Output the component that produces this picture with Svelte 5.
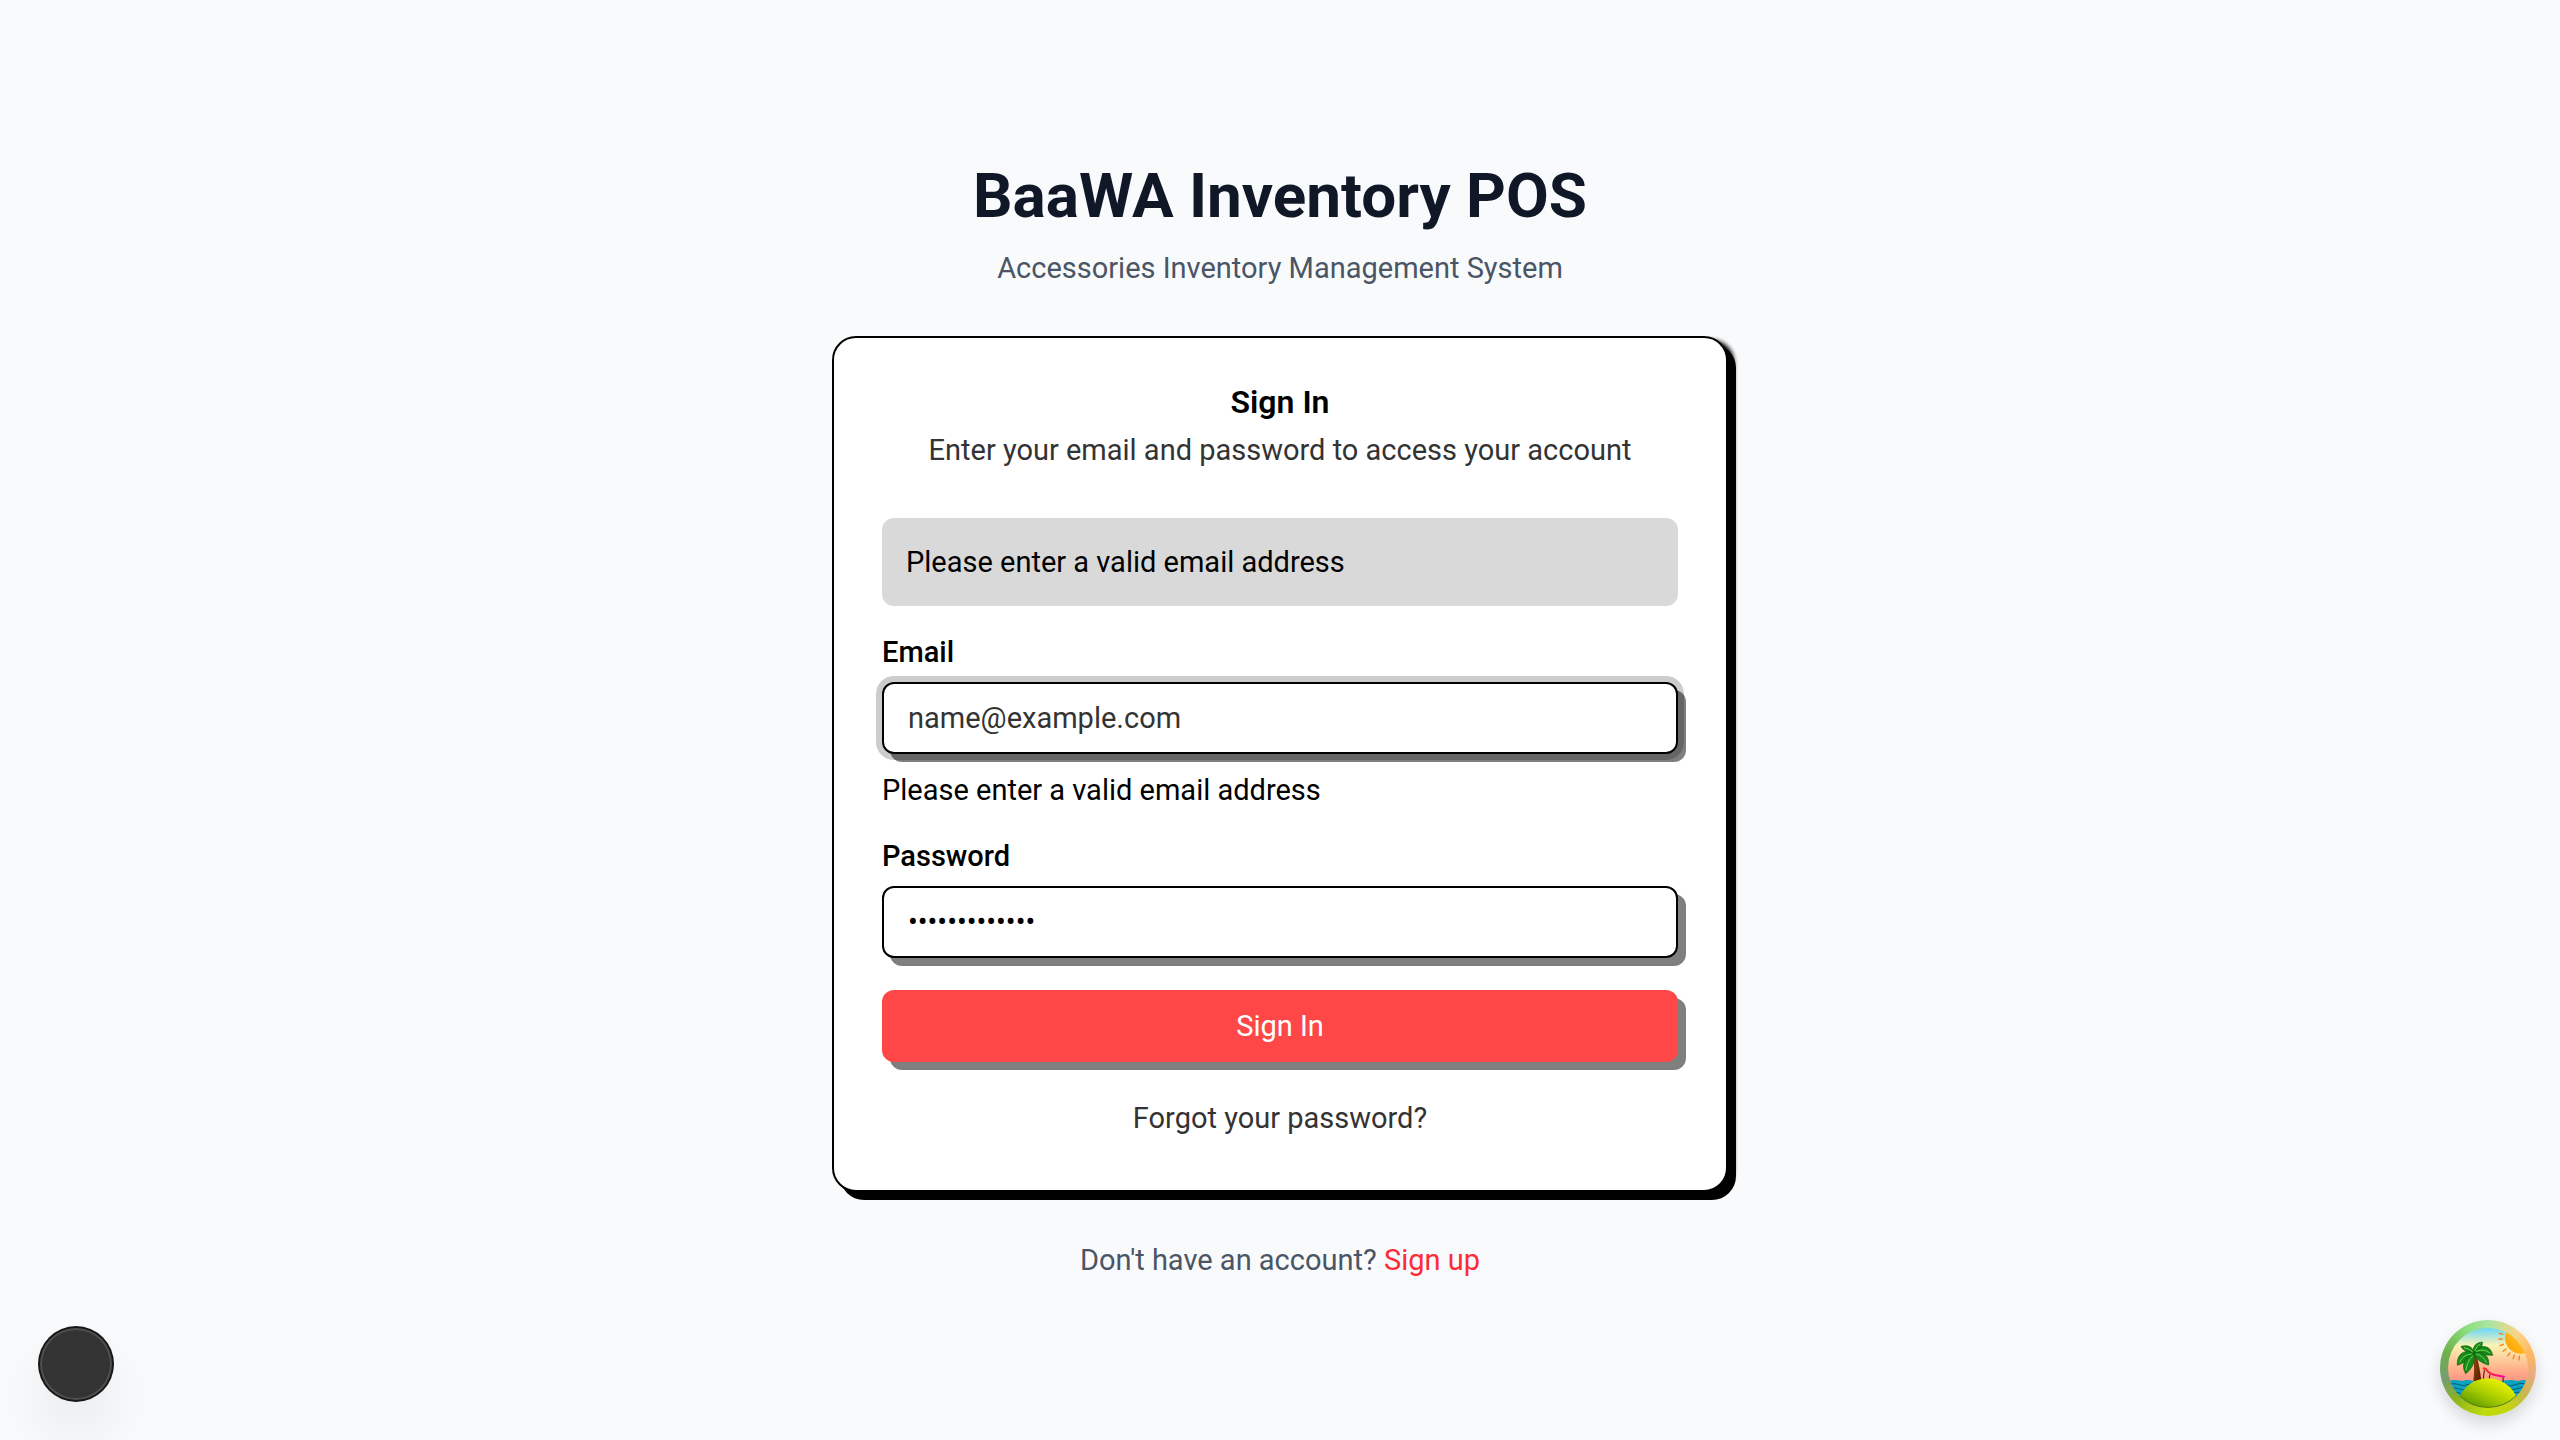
<script lang="ts">
  let email = $state('');
  let password = $state('password12345');
  const message = 'Please enter a valid email address';
  const rays = [4, 20, 36, 53, 70, 87, 102];
</script>

<main class="page">
  <div class="column">
    <header class="brand">
      <h1>BaaWA Inventory POS</h1>
      <p>Accessories Inventory Management System</p>
    </header>

    <section class="card">
      <div class="card-head">
        <h2>Sign In</h2>
        <p>Enter your email and password to access your account</p>
      </div>

      <form class="form" novalidate onsubmit={(e) => e.preventDefault()}>
        <div class="alert" role="alert">{message}</div>

        <div class="field">
          <label for="email">Email</label>
          <input
            id="email"
            class="invalid"
            type="email"
            placeholder="name@example.com"
            aria-invalid="true"
            aria-describedby="email-error"
            bind:value={email}
          />
          <p id="email-error" class="error">{message}</p>
        </div>

        <div class="field">
          <label for="password">Password</label>
          <input id="password" type="password" bind:value={password} />
        </div>

        <button class="submit" type="submit">Sign In</button>

        <div class="forgot"><a href="#forgot">Forgot your password?</a></div>
      </form>
    </section>

    <p class="signup">Don't have an account? <a href="#signup">Sign up</a></p>
  </div>
</main>

<button class="dev-badge" type="button" aria-label="Open dev tools"></button>

<button class="island" type="button" aria-label="Open query devtools">
  <svg viewBox="84 84 240 240" aria-hidden="true">
    <defs>
      <linearGradient id="sky" x1="0" y1="0" x2="0" y2="1">
        <stop offset="0" stop-color="#6bd8fa" />
        <stop offset="0.22" stop-color="#fbf3b4" />
        <stop offset="0.5" stop-color="#ffb48c" />
        <stop offset="0.72" stop-color="#fa8a80" />
      </linearGradient>
      <linearGradient id="sun" x1="0" y1="1" x2="1" y2="0">
        <stop offset="0" stop-color="#ff9a00" />
        <stop offset="0.7" stop-color="#ffd02e" />
      </linearGradient>
      <linearGradient id="sand" gradientUnits="userSpaceOnUse" x1="222" y1="236" x2="178" y2="330">
        <stop offset="0" stop-color="#e6f000" />
        <stop offset="0.5" stop-color="#a9cc00" />
        <stop offset="1" stop-color="#5c9c00" />
      </linearGradient>
      <linearGradient id="trunk" x1="0" y1="0" x2="1" y2="1">
        <stop offset="0" stop-color="#a34a08" />
        <stop offset="1" stop-color="#4d1c02" />
      </linearGradient>
      <linearGradient id="chair" x1="0" y1="0" x2="1" y2="0">
        <stop offset="0" stop-color="#ff2418" />
        <stop offset="1" stop-color="#ff00a2" />
      </linearGradient>
      <clipPath id="disc"><circle cx="204" cy="204" r="120" /></clipPath>
    </defs>
    <g clip-path="url(#disc)">
      <rect x="84" y="84" width="240" height="240" fill="url(#sky)" />
      <circle cx="302" cy="114" r="47" fill="url(#sun)" />
      <g stroke="#ff7a14" stroke-width="4" stroke-linecap="round">
        {#each rays as angle}
          <line x1="302" y1="169" x2="302" y2="180" transform="rotate({angle} 302 114)" />
        {/each}
      </g>
      <path d="M80 244q16-6 34-3 14 3 20 0 10-2 26 2v70H80z" fill="#0aa3c2" />
      <path d="M246 244q18-6 36-3 14 3 22 0 10-2 26 2v70h-84z" fill="#0aa3c2" />
      <g fill="none" stroke="#045b78" stroke-width="3">
        <path d="M84 255q18-8 32-1t34-2M88 268q16-8 30-1t28-2M98 280q12-6 24 0" />
        <path d="M256 254q14 8 30 0t36-1M258 266q16 8 30 1t30-2M276 279q14-4 32-1" />
      </g>
      <path d="M159 164q7-3 11 3 9 32 14 76h-24q5-36-1-79z" fill="url(#trunk)" />
      <g fill="#168a1b" stroke="#075c10" stroke-width="2" stroke-linejoin="round">
        <path d="M162 160C158 140 146 134 123 139C127 150 143 158 162 160Z" />
        <path d="M160 158C158 138 168 128 187 126C188 142 178 154 160 158Z" />
        <path d="M160 160C176 134 210 130 218 166C196 166 180 160 160 160Z" />
        <path d="M160 160C190 148 208 168 206 195C186 190 170 180 160 160Z" />
        <path d="M162 160C136 146 110 160 112 196C130 190 148 178 162 160Z" />
        <path d="M162 160C134 170 122 196 137 221C156 206 168 186 162 160Z" />
      </g>
      <g fill="none" stroke="#75d447" stroke-width="3" stroke-linecap="round">
        <path d="M133 143Q149 146 158 156M165 152Q169 138 180 132M170 154Q193 144 210 159M170 162Q190 168 199 187M154 162Q127 165 119 186M158 168Q141 184 138 210" />
      </g>
      <path d="M193 210l-3 27M210 223l-3 16M250 232l-2 18" stroke="#2c1030" stroke-width="3" />
      <path
        d="M191 205q8 1 12 9 8 8 18 10 14 3 31 6"
        fill="none"
        stroke="url(#chair)"
        stroke-width="6"
        stroke-linecap="round"
      />
      <ellipse cx="204" cy="320" rx="91" ry="85" fill="url(#sand)" />
      <path d="M121 289A120 120 0 0 0 288 288" fill="none" stroke="#557d08" stroke-width="3" />
    </g>
  </svg>
</button>

<style>
  :global(body) {
    margin: 0;
    background: #f9fafc;
    font-family: Roboto, 'Noto Sans', sans-serif;
    font-size: 29px;
    line-height: 40px;
    color: #000;
  }

  h1,
  h2,
  p {
    margin: 0;
  }

  a {
    color: inherit;
    text-decoration: none;
  }

  .page {
    box-sizing: border-box;
    min-height: 100vh;
    display: flex;
    align-items: center;
    justify-content: center;
    padding: 48px 32px;
    background: #f9fafc;
  }

  .column {
    width: 100%;
    max-width: 896px;
    display: flex;
    flex-direction: column;
    gap: 48px;
    text-align: center;
  }

  .brand {
    display: flex;
    flex-direction: column;
    gap: 16px;
    color: #4a5565;
  }

  h1 {
    font-size: 62px;
    line-height: 72px;
    font-weight: 700;
    color: #101828;
  }

  .card {
    display: flex;
    flex-direction: column;
    gap: 48px;
    padding: 48px;
    border: 2px solid #000;
    border-radius: 24px;
    background: #fff;
    box-shadow:
      8px 8px 0 0 #000,
      8px 2px 4px -2px #000;
  }

  .card-head {
    display: flex;
    flex-direction: column;
    gap: 12px;
    color: #333;
  }

  h2 {
    font-size: 32px;
    line-height: 32px;
    font-weight: 600;
    color: #000;
  }

  .form {
    display: flex;
    flex-direction: column;
    gap: 32px;
  }

  .alert {
    padding: 24px;
    border-radius: 12px;
    background: #d9d9d9;
    text-align: left;
  }

  .field {
    display: flex;
    flex-direction: column;
    gap: 16px;
    text-align: left;
  }

  label {
    line-height: 28px;
    font-weight: 500;
  }

  input {
    box-sizing: border-box;
    width: 100%;
    height: 72px;
    padding: 8px 24px;
    border: 2px solid #000;
    border-radius: 12px;
    outline: none;
    background: #fff;
    font: inherit;
    color: #000;
    box-shadow: 8px 8px 0 0 rgba(0, 0, 0, 0.5);
  }

  input::placeholder {
    color: #333;
    opacity: 1;
  }

  .invalid {
    box-shadow:
      0 0 0 6px rgba(0, 0, 0, 0.2),
      8px 8px 0 0 rgba(0, 0, 0, 0.5);
  }

  .submit {
    height: 72px;
    padding: 0 32px;
    border: 0;
    border-radius: 12px;
    background: #ff4747;
    color: #fff;
    font: inherit;
    cursor: pointer;
    box-shadow: 8px 8px 0 0 rgba(0, 0, 0, 0.5);
  }

  .forgot {
    line-height: 48px;
    color: #333;
  }

  .signup {
    color: #4a5565;
  }

  .signup a {
    color: #fb2c36;
  }

  .dev-badge {
    position: fixed;
    left: 40px;
    bottom: 40px;
    width: 72px;
    height: 72px;
    padding: 0;
    border: 0;
    border-radius: 50%;
    background: #333;
    box-shadow:
      0 0 0 2px #171717,
      inset 0 0 0 2px rgba(255, 255, 255, 0.14),
      0 32px 64px -16px rgba(0, 0, 0, 0.24);
  }

  .island {
    position: fixed;
    right: 24px;
    bottom: 24px;
    width: 96px;
    height: 96px;
    padding: 8px;
    border: 0;
    border-radius: 50%;
    background: conic-gradient(
      #a8e5a2,
      #f8d488 40deg,
      #ffb860 70deg,
      #e9aa80 100deg,
      #c7b84c 125deg,
      #c2d60c 155deg,
      #c0dc0c 185deg,
      #8cb41c 225deg,
      #759b72 255deg,
      #6fb04a 290deg,
      #8ade7c 330deg,
      #a8e5a2
    );
    box-shadow: 0 8px 16px rgba(0, 0, 0, 0.14);
  }

  .island svg {
    display: block;
    width: 100%;
    height: 100%;
  }
</style>
